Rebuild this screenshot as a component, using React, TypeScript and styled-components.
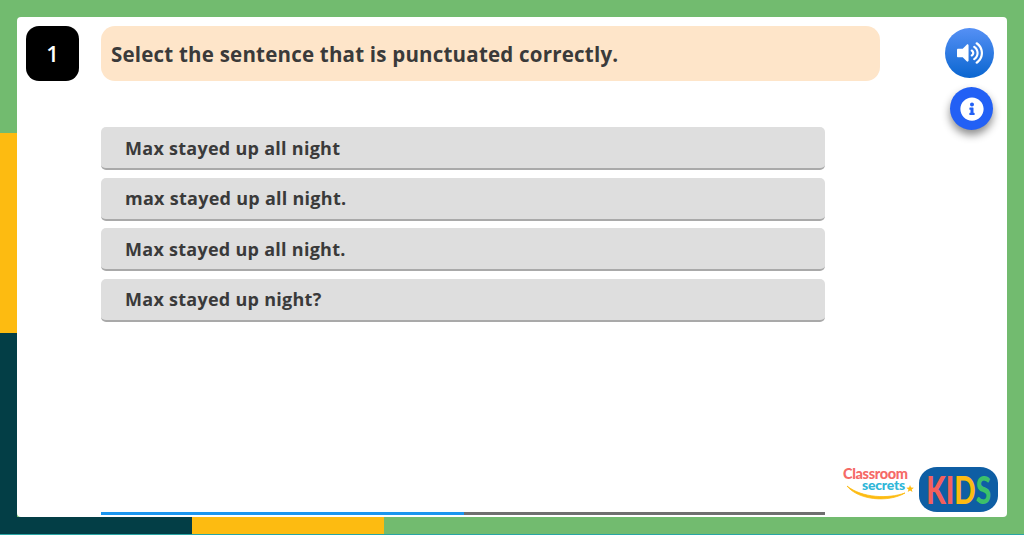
import React from "react";
import styled, { createGlobalStyle } from "styled-components";
import { FaVolumeUp, FaInfoCircle } from "react-icons/fa";

const Global = createGlobalStyle`
  html, body { margin: 0; padding: 0; height: 100%; overflow: hidden; }
  #root { height: 100%; }
`;

const Stage = styled.div`
  box-sizing: border-box;
  width: 1024px;
  height: 535px;
  padding: 17px 17px 18px 17px;
  font-family: "Open Sans", "Noto Sans", sans-serif;
  background:
    linear-gradient(#2aa5a5, #2aa5a5) 0 533.5px / 100% 1.5px no-repeat,
    linear-gradient(90deg, #033e46 0 192px, #fdbb11 192px 384px, #72bb6f 384px) 0 517px / 100% 18px no-repeat,
    linear-gradient(#72bb6f 0 133px, #fdbb11 133px 333px, #033e46 333px) 0 0 / 17px 100% no-repeat,
    #72bb6f;
`;

const Card = styled.main`
  box-sizing: border-box;
  height: 500px;
  padding: 9px 9px 2px 9px;
  background: #fff;
  border-radius: 4px;
  display: grid;
  grid-template-columns: 53px 22px 724px 55px 65px 49px 4px;
  grid-template-rows: 55px auto 1fr 3px;
`;

const Badge = styled.div`
  grid-column: 1;
  grid-row: 1;
  padding-bottom: 2px;
  box-sizing: border-box;
  background: #000;
  color: #fff;
  border-radius: 13px;
  display: flex;
  align-items: center;
  justify-content: center;
  font-size: 22px;
  font-weight: 600;
`;

const Prompt = styled.h1`
  grid-column: 3 / 5;
  grid-row: 1;
  margin: 0;
  padding: 0 10px;
  box-sizing: border-box;
  background: #fee5c9;
  border-radius: 14px;
  display: flex;
  align-items: center;
  color: #3a3a3a;
  font-size: 20.5px;
  font-weight: 700;
  letter-spacing: 0.21px;
`;

const Options = styled.div`
  grid-column: 3;
  grid-row: 2;
  margin-top: 46px;
  display: flex;
  flex-direction: column;
  gap: 7.5px;
`;

const Option = styled.div`
  box-sizing: border-box;
  height: 43px;
  padding-left: 24px;
  background: #dedede;
  border-bottom: 2px solid #a9a9a9;
  border-radius: 5px;
  display: flex;
  align-items: center;
  color: #3a3a3a;
  font-size: 18px;
  font-weight: 700;
  letter-spacing: 0.27px;
`;

const Tools = styled.div`
  grid-column: 6;
  grid-row: 1 / 3;
  padding-top: 2px;
  display: flex;
  flex-direction: column;
  align-items: flex-end;
  gap: 9px;
`;

const Sound = styled.button`
  width: 49px;
  height: 50px;
  padding: 0;
  border: 0;
  border-radius: 50%;
  background: linear-gradient(#5590f5, #0a66d0);
  color: #fff;
  display: flex;
  align-items: center;
  justify-content: center;
  font-size: 26px;
`;

const Info = styled.button`
  width: 43px;
  height: 43px;
  margin-right: 1px;
  padding: 0;
  border: 0;
  border-radius: 50%;
  background: #2260f5;
  box-shadow: 0 5px 8px rgba(0, 0, 0, 0.45);
  color: #fff;
  display: flex;
  align-items: center;
  justify-content: center;
  font-size: 24px;
`;

const Logos = styled.div`
  grid-column: 4 / 8;
  grid-row: 3;
  display: flex;
  align-items: flex-end;
  justify-content: flex-end;
  gap: 6px;
`;

const Secrets = styled.div`
  position: relative;
  width: 70px;
  height: 34px;
  margin-bottom: 10px;
  font-family: "Lato", sans-serif;
  font-weight: 900;
  line-height: 11px;
`;

const SecretsTop = styled.div`
  color: #f56a67;
  font-size: 14.5px;
  letter-spacing: -0.35px;
  white-space: nowrap;
`;

const SecretsBottom = styled.div`
  padding-left: 19px;
  color: #2fb6d8;
  font-size: 14px;
  letter-spacing: -0.2px;
`;

const Swoosh = styled.svg`
  position: absolute;
  left: 1px;
  top: 10px;
  width: 70px;
  height: 24px;
`;

const Kids = styled.div`
  box-sizing: border-box;
  width: 79px;
  height: 45px;
  background: #0e5ea4;
  border-radius: 18px / 16px;
  display: flex;
  align-items: center;
  justify-content: center;
  font-family: "Lato", sans-serif;
  font-size: 37px;
  font-weight: 900;
  line-height: 1;
`;

const KidsWord = styled.span`
  display: inline-block;
  transform: scaleX(0.76);
  white-space: nowrap;
`;

const KidsLetter = styled.span<{ $color: string }>`
  color: ${(p) => p.$color};
`;

const Track = styled.div`
  grid-column: 3;
  grid-row: 4;
  height: 3px;
  background: #6f6f6f;
`;

const Fill = styled.div`
  height: 100%;
  background: #1a96f0;
`;

const answers = [
  "Max stayed up all night",
  "max stayed up all night.",
  "Max stayed up all night.",
  "Max stayed up night?",
];

export default function App() {
  return (
    <Stage>
      <Global />
      <Card>
        <Badge>1</Badge>
        <Prompt>Select the sentence that is punctuated correctly.</Prompt>
        <Tools>
          <Sound aria-label="Play audio"><FaVolumeUp /></Sound>
          <Info aria-label="Information"><FaInfoCircle /></Info>
        </Tools>
        <Options>
          {answers.map((a) => (
            <Option key={a}>{a}</Option>
          ))}
        </Options>
        <Logos>
          <Secrets>
            <SecretsTop>Classroom</SecretsTop>
            <SecretsBottom>secrets</SecretsBottom>
            <Swoosh viewBox="0 0 70 24" aria-hidden="true">
              <path d="M3 8 C 14 22, 44 25, 61 15 C 44 21, 18 20, 3 8 Z" fill="#fdbb11" stroke="#fdbb11" strokeWidth="0.8" />
              <path d="M66 7 l1.1 2.6 2.8 .1 -2.2 1.7 .8 2.7 -2.4 -1.5 -2.4 1.5 .8 -2.7 -2.2 -1.7 2.8 -.1 z" fill="#fdbb11" />
            </Swoosh>
          </Secrets>
          <Kids>
            <KidsWord>
              <KidsLetter $color="#f4605c">K</KidsLetter>
              <KidsLetter $color="#f4605c">I</KidsLetter>
              <KidsLetter $color="#fdbb11">D</KidsLetter>
              <KidsLetter $color="#3cc06a">S</KidsLetter>
            </KidsWord>
          </Kids>
        </Logos>
        <Track>
          <Fill style={{ width: `${(363 / 724) * 100}%` }} />
        </Track>
      </Card>
    </Stage>
  );
}
